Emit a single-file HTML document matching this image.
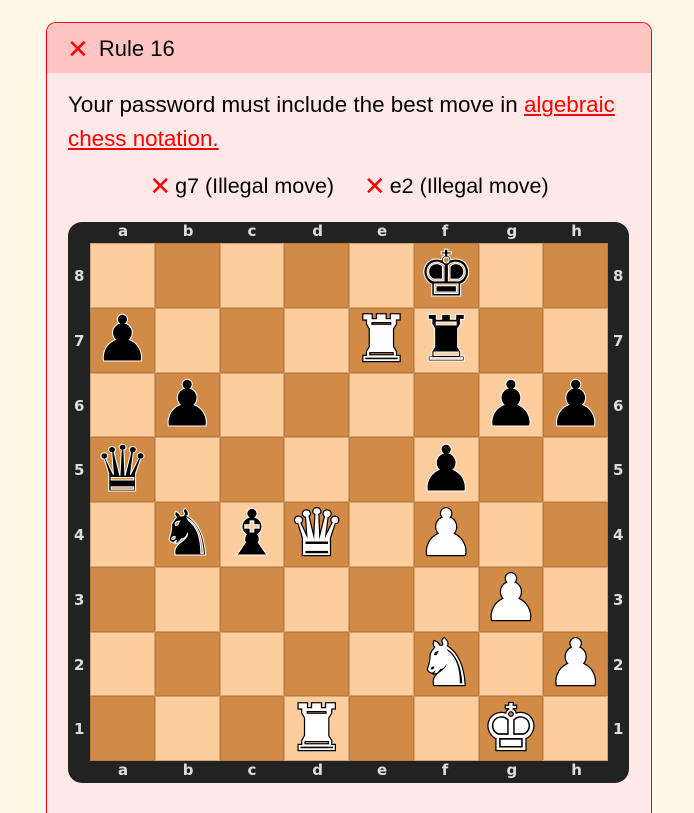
<!DOCTYPE html>
<html><head><meta charset="utf-8"><style>
html,body{margin:0;width:694px;height:796px;overflow:hidden}
body{background:#fff8e6;font-family:"Liberation Sans",sans-serif}
.card{position:absolute;left:46px;top:22px;width:604px;height:790px;border:1px solid #f00;border-bottom:none;border-radius:10px 10px 0 0;background:#ffe8e8;overflow:hidden}
.hd{height:50px;background:#ffc5c5;font-size:22px;line-height:52px;padding-left:20px}
.x{color:#f00;font-size:26px;vertical-align:-2px;margin-right:4px}
.txt{position:absolute;left:21px;top:65px;width:580px;font-size:22.4px;line-height:34px}
.txt a{color:#f00;text-decoration:underline}
.mv{position:absolute;top:148px;left:0;width:604px;text-align:center;font-size:21.5px}
.board{position:absolute;left:21px;top:199px;width:561px;height:561px;background:#222;border-radius:14px}
.grid{position:absolute;left:22px;top:21px;width:518px;height:518px;display:grid;grid-template-columns:repeat(8,1fr);grid-template-rows:repeat(8,1fr)}
.grid div{display:flex;align-items:center;justify-content:center;font-family:"DejaVu Sans",sans-serif;font-size:64px;line-height:1;border:0.5px solid rgba(150,100,50,.4);overflow:hidden}
.l{background:#fecd9e}.d{background:#d18b47}
.b{color:#000;-webkit-text-stroke:1px #fff}
.w{color:#fff;-webkit-text-stroke:2.5px #000;paint-order:stroke fill}
.lab{position:absolute;color:#ddd;font-weight:bold;font-size:15px;font-family:"DejaVu Sans",sans-serif}
</style></head><body>
<div class="card">
<div class="hd"><span class="x">✕</span> Rule 16</div>
<div class="txt">Your password must include the best move in <a>algebraic chess notation.</a></div>
<div class="mv"><span class="x">✕</span>g7 (Illegal move) &nbsp;&nbsp;&nbsp; <span class="x">✕</span>e2 (Illegal move)</div>
<div class="board" id="bd"><div class="grid" id="g"></div></div>
</div>
<script>
var P={f8:'bk',a7:'bp',e7:'wr',f7:'br',b6:'bp',g6:'bp',h6:'bp',a5:'bq',f5:'bp',b4:'bn',c4:'bb',d4:'wq',f4:'wp',g3:'wp',f2:'wn',h2:'wp',d1:'wr',g1:'wk'};
var S={k:'♚',q:'♛',r:'♜',b:'♝',n:'♞',p:'♟'};
var f='abcdefgh',h='',g=document.getElementById('g'),bd=document.getElementById('bd');
for(var r=8;r>=1;r--)for(var c=0;c<8;c++){var sq=f[c]+r,p=P[sq];h+='<div class="'+((r+c)%2==0?'l':'d')+'">'+(p?'<span class="'+p[0]+'">'+S[p[1]]+'</span>':'')+'</div>';}
g.innerHTML=h;
var L='';for(var c=0;c<8;c++){var x=22+c*64.75+28;L+='<span class="lab" style="left:'+x+'px;top:0">'+f[c]+'</span><span class="lab" style="left:'+x+'px;top:539px">'+f[c]+'</span>';}
for(var r=0;r<8;r++){var y=21+r*64.75+24;L+='<span class="lab" style="left:6px;top:'+y+'px">'+(8-r)+'</span><span class="lab" style="left:545px;top:'+y+'px">'+(8-r)+'</span>';}
bd.insertAdjacentHTML('beforeend',L);
</script>
</body></html>
